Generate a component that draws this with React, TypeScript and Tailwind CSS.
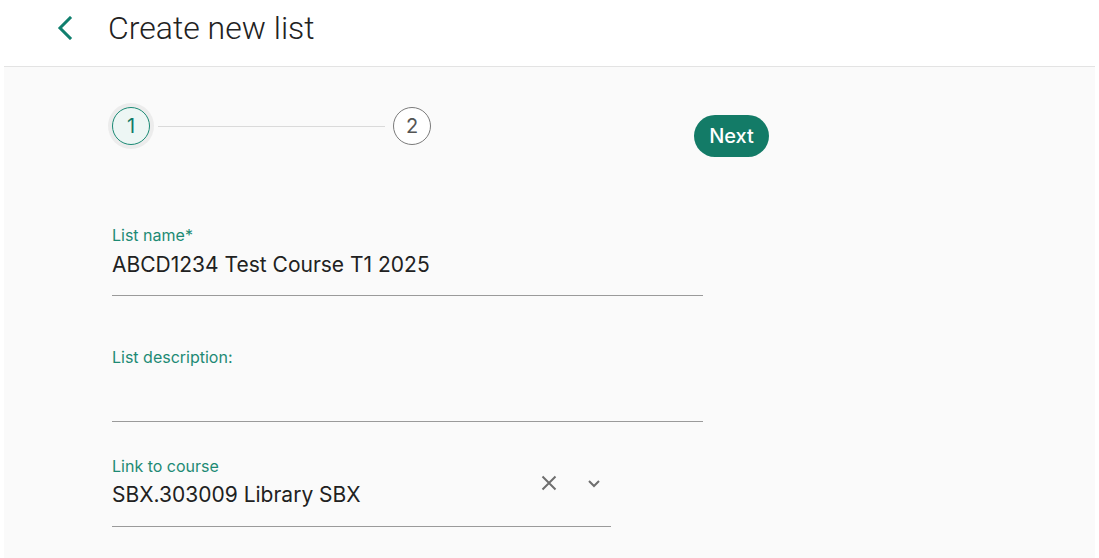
import React from 'react';

export default function App() {
  return (
    <div className="min-h-[558px] bg-white" style={{ fontFamily: 'Inter, "Noto Sans", sans-serif' }}>
      <header className="h-[67px] flex items-center pb-[10px] border-b border-[#e3e3e3] mx-[4px] pl-[49px]">
        <button type="button" aria-label="Back" className="w-[24px] h-[28px] flex items-center justify-center text-[#107f6e]">
          <svg width="18" height="24" viewBox="0 0 18 24" fill="none">
            <path d="M14 2 L4 12 L14 22" stroke="currentColor" strokeWidth="3" strokeLinecap="square" />
          </svg>
        </button>
        <h1
          className="ml-[31px] text-[32px] font-light text-[#222]"
          style={{ fontFamily: 'Roboto, Inter, sans-serif' }}
        >
          Create new list
        </h1>
      </header>

      <main className="mx-[4px] bg-[#fafafa] min-h-[491px] pl-[108px] pt-[36px] pb-[20px]">
        <div className="flex items-start">
          <div className="flex items-center w-[323px] -ml-[4px]">
            <div className="w-[46px] h-[46px] rounded-full bg-[#ececec] flex items-center justify-center">
              <div className="w-[38px] h-[38px] rounded-full border border-[#1a8a74] bg-[#edf6f4] flex items-center justify-center text-[20px] text-[#127b68]">
                1
              </div>
            </div>
            <div className="flex-1 h-px bg-[#dadada] ml-[4px] mr-[8px]" />
            <div className="w-[38px] h-[38px] rounded-full border border-[#7a7a7a] bg-white flex items-center justify-center text-[20px] text-[#555]">
              2
            </div>
          </div>
          <button
            type="button"
            className="ml-[263px] mt-[12px] h-[42px] w-[75px] rounded-full bg-[#137b67] text-white text-[20px] font-medium"
          >
            Next
          </button>
        </div>

        {/* List name */}
        <div className="mt-[69px] w-[591px] border-b border-[#9a9a9a] pb-[18px]">
          <div className="text-[16px] leading-[18px] text-[#1d8a74]">List name*</div>
          <div className="mt-[9px] text-[21px] leading-[24px] text-[#212121]">ABCD1234 Test Course T1 2025</div>
        </div>

        {/* List description */}
        <div className="mt-[52px] w-[591px] border-b border-[#9a9a9a]">
          <div className="text-[16px] leading-[18px] text-[#1d8a74]">List description:</div>
          <div className="h-[55px]" />
        </div>

        {/* Link to course */}
        <div className="mt-[35px] w-[499px] border-b border-[#9a9a9a] pb-[19px]">
          <div className="text-[16px] leading-[18px] text-[#1d8a74]">Link to course</div>
          <div className="mt-[8px] flex items-center h-[24px]">
            <div className="flex-1 text-[21px] leading-[24px] text-[#212121]">SBX.303009 Library SBX</div>
            <div className="flex items-center gap-[30px] mr-[10px] -mt-[24px] text-[#6e6e6e]">
              <svg width="16" height="16" viewBox="0 0 16 16" fill="none">
                <path d="M1.5 1.5 L14.5 14.5 M14.5 1.5 L1.5 14.5" stroke="currentColor" strokeWidth="2" />
              </svg>
              <svg width="14" height="10" viewBox="0 0 14 10" fill="none">
                <path d="M2 3 L7 8 L12 3" stroke="currentColor" strokeWidth="2" />
              </svg>
            </div>
          </div>
        </div>
      </main>
    </div>
  );
}
